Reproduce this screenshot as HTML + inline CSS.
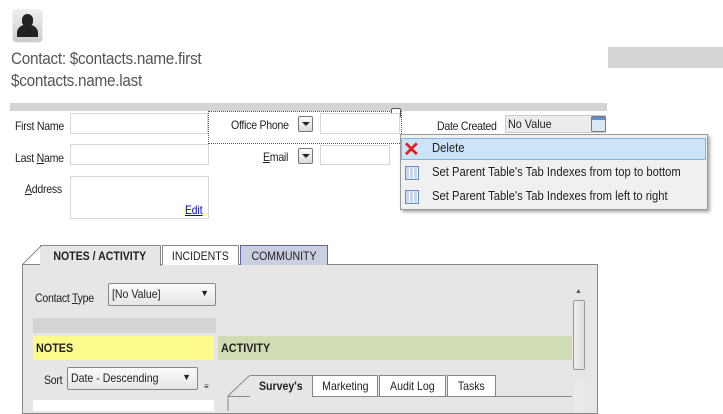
<!DOCTYPE html>
<html><head><style>
body{margin:0;width:723px;height:411px;background:#fff;position:relative;overflow:hidden;font-family:"Liberation Sans",sans-serif;font-size:12px;color:#222}
.a{position:absolute}
.inp{position:absolute;background:#fff;border:1px solid #d6d6d6;box-sizing:border-box}
.lbl{position:absolute;font-size:12px;letter-spacing:-0.3px;transform:scaleX(.88);transform-origin:left}
.btn{position:absolute;width:15px;height:16px;border:1px solid #777;border-radius:2px;background:linear-gradient(#fafafa,#ddd);box-sizing:border-box}
.btn:after{content:"";position:absolute;left:3px;top:5px;border:4px solid transparent;border-top:4px solid #222;border-bottom:0}
.tab{position:absolute;top:245px;height:20px;border:1px solid #888;border-bottom:none;box-sizing:border-box;font-size:12px;text-align:center;line-height:20px}
.tab span{display:inline-block;transform:scaleX(.88)}
</style></head><body>
<div class="a" style="left:13px;top:10px;width:29px;height:32px;border-radius:3px;background:linear-gradient(#eee,#ccc);box-shadow:0 0 1px #999"></div>
<div class="a" style="left:22px;top:14px;width:11px;height:13px;border-radius:6px;background:#222"></div>
<div class="a" style="left:17px;top:25px;width:21px;height:12px;border-radius:8px 8px 0 0;background:#222"></div>
<div class="a" style="left:11px;top:49px;font-size:17px;color:#555;transform:scaleX(.9);transform-origin:left;letter-spacing:-.3px;white-space:nowrap">Contact: $contacts.name.first</div>
<div class="a" style="left:11px;top:71px;font-size:17px;color:#555;transform:scaleX(.9);transform-origin:left;letter-spacing:-.3px">$contacts.name.last</div>
<div class="a" style="left:608px;top:47px;width:115px;height:21px;background:#d4d4d4"></div>
<div class="a" style="left:10px;top:103px;width:597px;height:8px;background:#d4d4d4"></div>

<div class="lbl" style="left:15px;top:119px">First Name</div>
<div class="inp" style="left:70px;top:113px;width:138px;height:21px"></div>
<div class="a" style="left:208px;top:111px;width:194px;height:33px;border:1px dotted #555;box-sizing:border-box"></div>
<div class="a" style="left:391px;top:108px;width:8px;height:8px;border:1px solid #555;background:#fff;border-radius:2px"></div>
<div class="lbl" style="left:231px;top:118px">Office Phone</div>
<div class="btn" style="left:298px;top:116px"></div>
<div class="inp" style="left:320px;top:113px;width:80px;height:21px"></div>
<div class="lbl" style="left:437px;top:119px">Date Created</div>
<div class="a" style="left:505px;top:115px;width:101px;height:18px;background:#ececec;border:1px solid #ccc;box-sizing:border-box;padding-left:2px;line-height:16px"><span style="display:inline-block;transform:scaleX(.9);transform-origin:left">No Value</span></div>
<div class="a" style="left:591px;top:116px;width:13px;height:14px;border:1px solid #777;border-radius:2px;background:linear-gradient(#5b8fd8 0 3px,#dde8f5 3px)"></div>

<div class="lbl" style="left:15px;top:151px">Last <u>N</u>ame</div>
<div class="inp" style="left:70px;top:144px;width:139px;height:21px"></div>
<div class="lbl" style="left:263px;top:150px"><u>E</u>mail</div>
<div class="btn" style="left:298px;top:148px"></div>
<div class="inp" style="left:320px;top:145px;width:70px;height:20px"></div>

<div class="lbl" style="left:25px;top:182px"><u>A</u>ddress</div>
<div class="inp" style="left:70px;top:176px;width:139px;height:43px"></div>
<div class="a" style="left:185px;top:203px;color:#00c;text-decoration:underline;transform:scaleX(.85);transform-origin:left">Edit</div>

<div class="a" style="left:400px;top:134px;width:308px;height:76px;background:#f0f0f0;border:1px solid #999;box-sizing:border-box;box-shadow:2px 2px 3px rgba(0,0,0,.35)"></div>
<div class="a" style="left:401px;top:138px;width:305px;height:22px;background:#cde4f8;border:1px solid #7fb4e8;box-sizing:border-box"></div>
<div class="a" style="left:403px;top:137px;font-size:20px;color:#e02020;font-weight:bold">✕</div>
<div class="a" style="left:432px;top:141px;font-size:12.5px;transform:scaleX(.9);transform-origin:left">Delete</div>
<div class="a" style="left:405px;top:166px;width:12px;height:12px;border:1px solid #6a8cc0;background:repeating-linear-gradient(90deg,#c9d8ee 0 3px,#fff 3px 4px)"></div>
<div class="a" style="left:432px;top:165px;font-size:12.5px;transform:scaleX(.9);transform-origin:left;white-space:nowrap">Set Parent Table's Tab Indexes from top to bottom</div>
<div class="a" style="left:405px;top:190px;width:12px;height:12px;border:1px solid #6a8cc0;background:repeating-linear-gradient(90deg,#c9d8ee 0 3px,#fff 3px 4px)"></div>
<div class="a" style="left:432px;top:189px;font-size:12.5px;transform:scaleX(.9);transform-origin:left;white-space:nowrap">Set Parent Table's Tab Indexes from left to right</div>

<div class="a" style="left:22px;top:264px;width:576px;height:150px;background:#e6e6e6;border:1px solid #888;box-sizing:border-box"></div>
<div class="tab" style="left:40px;width:121px;background:#e6e6e6;height:21px;font-weight:bold;border-left:none"><span>NOTES / ACTIVITY</span></div>
<svg class="a" style="left:22px;top:244px" width="20" height="22"><path d="M0 21 L20 1" stroke="#888" fill="none"/></svg>
<div class="tab" style="left:162px;width:77px;background:#fff"><span>INCIDENTS</span></div>
<div class="tab" style="left:240px;width:88px;background:#c9cee0;border-color:#5a6aa0"><span>COMMUNITY</span></div>

<div class="lbl" style="left:35px;top:291px">Contact <u>T</u>ype</div>
<div class="a" style="left:108px;top:283px;width:108px;height:23px;border:1px solid #888;border-radius:2px;background:linear-gradient(#fafafa,#e6e6e6);box-sizing:border-box;padding:3px"><span style="display:inline-block;transform:scaleX(.88);transform-origin:left">[No Value]</span><span style="position:absolute;right:6px;top:4px;font-size:9px">▼</span></div>
<div class="a" style="left:33px;top:318px;width:183px;height:15px;background:#d4d4d4"></div>
<div class="a" style="left:33px;top:336px;width:181px;height:24px;background:#fdfa8c;font-weight:bold;line-height:24px;padding-left:3px;box-sizing:border-box"><span style="display:inline-block;transform:scaleX(.9);transform-origin:left">NOTES</span></div>
<div class="a" style="left:218px;top:336px;width:354px;height:24px;background:#d0ddb2;font-weight:bold;line-height:24px;padding-left:3px;box-sizing:border-box"><span style="display:inline-block;transform:scaleX(.9);transform-origin:left">ACTIVITY</span></div>
<div class="a" style="left:575px;top:288px;font-size:7px;color:#555">▲</div>
<div class="a" style="left:573px;top:300px;width:12px;height:70px;border:1px solid #999;border-radius:2px;background:linear-gradient(90deg,#eee,#ddd);box-sizing:border-box"></div>
<div class="a" style="left:574px;top:382px;width:11px;height:29px;background:#eaeaea"></div>
<div class="lbl" style="left:44px;top:373px">Sort</div>
<div class="a" style="left:67px;top:367px;width:131px;height:23px;border:1px solid #888;border-radius:2px;background:linear-gradient(#fafafa,#e6e6e6);box-sizing:border-box;padding:3px"><span style="display:inline-block;transform:scaleX(.88);transform-origin:left">Date - Descending</span><span style="position:absolute;right:6px;top:4px;font-size:9px">▼</span></div>
<div class="a" style="left:204px;top:382px;font-size:8px">≡</div>
<div class="a" style="left:33px;top:400px;width:181px;height:11px;background:#fff"></div>
<svg class="a" style="left:227px;top:375px" width="25" height="36"><path d="M1 36 L1 21 L22 1 L25 1" stroke="#888" fill="none"/></svg>
<div class="a" style="left:228px;top:396px;width:344px;height:1px;background:#888"></div>
<div class="tab" style="left:250px;top:375px;width:62px;height:22px;background:#e6e6e6;font-weight:bold;border:none;border-top:1px solid #888"><span>Survey's</span></div>
<div class="tab" style="left:312px;top:375px;width:66px;height:21px;background:#fff"><span>Marketing</span></div>
<div class="tab" style="left:379px;top:375px;width:67px;height:21px;background:#fff"><span>Audit Log</span></div>
<div class="tab" style="left:447px;top:375px;width:49px;height:21px;background:#fff"><span>Tasks</span></div>
</body></html>
